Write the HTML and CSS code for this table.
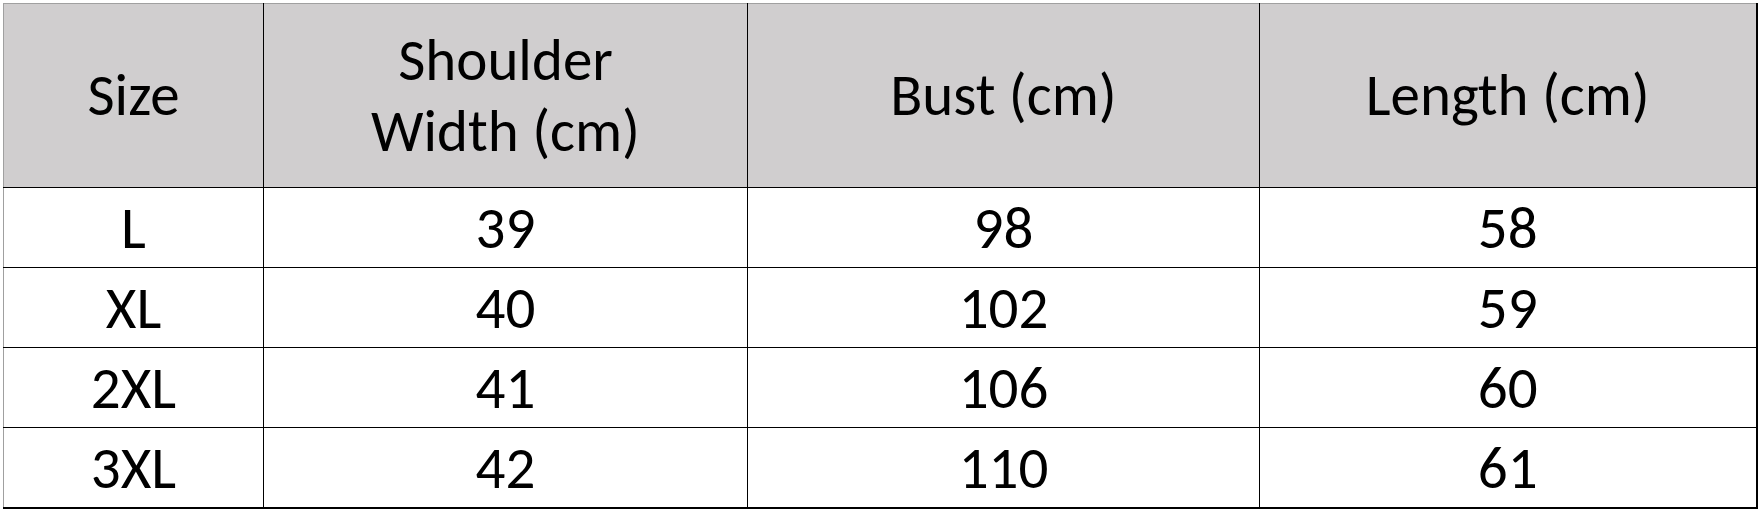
FILE: index.html
```html
<!DOCTYPE html>
<html>
<head>
<meta charset="utf-8">
<link rel="stylesheet" href="styles.css">
</head>
<body>
<div class="sheet">
<table class="size-table">
  <colgroup>
    <col class="c1"><col class="c2"><col class="c3"><col class="c4">
  </colgroup>
  <thead>
    <tr>
      <th>Size</th>
      <th>Shoulder<br>Width (cm)</th>
      <th>Bust (cm)</th>
      <th>Length (cm)</th>
    </tr>
  </thead>
  <tbody>
    <tr><td>L</td><td>39</td><td>98</td><td>58</td></tr>
    <tr><td>XL</td><td>40</td><td>102</td><td>59</td></tr>
    <tr><td>2XL</td><td>41</td><td>106</td><td>60</td></tr>
    <tr><td>3XL</td><td>42</td><td>110</td><td>61</td></tr>
  </tbody>
</table>
</div>
</body>
</html>
```
FILE: styles.css
```css
html, body {
  margin: 0;
  padding: 0;
  background: #ffffff;
}
.sheet {
  padding: 3px 0 0 3px;
}
.size-table {
  border-collapse: collapse;
  table-layout: fixed;
  width: 1753px;
  font-family: "Carlito", "Lato", "Liberation Sans", sans-serif;
  font-size: 59px;
  color: #000;
}
.c1 { width: 260px; }
.c2 { width: 484px; }
.c3 { width: 512px; }
.c4 { width: 497px; }
.size-table th,
.size-table td {
  border: 1px solid #000;
  text-align: center;
  vertical-align: middle;
  padding: 0;
  font-weight: normal;
}
.size-table th {
  background: #d0cecf;
  height: 183px;
  line-height: 71px;
  border-top-color: #a0a0a0;
}
.size-table td {
  height: 79px;
  line-height: 70px;
}
.size-table tr > :first-child {
  border-left-color: #a0a0a0;
}
.size-table tr > :last-child {
  border-right-width: 2px;
}
.size-table tbody tr:last-child td {
  border-bottom-width: 2px;
}
```
